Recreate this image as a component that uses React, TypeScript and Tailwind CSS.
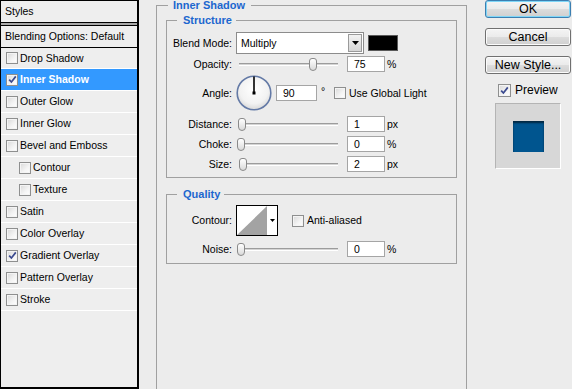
import React from 'react';

const STYLES = [
  { name: 'Drop Shadow', checked: false },
  { name: 'Inner Shadow', checked: true, selected: true },
  { name: 'Outer Glow', checked: false },
  { name: 'Inner Glow', checked: false },
  { name: 'Bevel and Emboss', checked: false },
  { name: 'Contour', checked: false, indent: true },
  { name: 'Texture', checked: false, indent: true },
  { name: 'Satin', checked: false },
  { name: 'Color Overlay', checked: false },
  { name: 'Gradient Overlay', checked: true },
  { name: 'Pattern Overlay', checked: false },
  { name: 'Stroke', checked: false },
];

function Check({ checked, size = 'w-[12px] h-[12px]' }: { checked?: boolean; size?: string }) {
  return (
    <span className={`${size} shrink-0 border border-[#8e8f8f] bg-[linear-gradient(135deg,#d8d8d8,#f4f4f4_60%,#ffffff)] shadow-[inset_0_0_0_1px_#f4f4f4] flex items-center justify-center`}>
      {checked && (
        <svg width="9" height="9" viewBox="0 0 9 9">
          <path d="M1.2 4.6 L3.4 7 L7.8 1.4" fill="none" stroke="#3b4a8f" strokeWidth="1.7" />
        </svg>
      )}
    </span>
  );
}

function Label({ children }: { children: React.ReactNode }) {
  return <div className="w-[65px] shrink-0 text-right">{children}</div>;
}

function Field({ value, w = 'w-[38px]' }: { value: string; w?: string }) {
  return (
    <div className={`${w} h-[16px] shrink-0 border border-[#a5a5a5] bg-white pl-[6px] flex items-center leading-none`}>
      {value}
    </div>
  );
}

function Slider({ value }: { value: number }) {
  return (
    <div className="relative w-[104px] h-[13px] shrink-0 flex items-center">
      <div className="ml-[2px] w-[99px] h-[3px] border-t border-[#9c9c9c] border-b border-b-white bg-[#d4d4d4]" />
      <div
        className="absolute top-0 w-[8px] h-[13px] rounded-[3px] rounded-b-[4px] border border-[#8a8a8a] bg-[linear-gradient(#ffffff,#dadada)]"
        style={{ left: `${value * 0.96}px` }}
      />
    </div>
  );
}

function SliderRow({ label, value, unit, mt }: { label: string; value: number; unit: string; mt: string }) {
  return (
    <div className={`flex items-center h-[16px] ${mt}`}>
      <Label>{label}</Label>
      <div className="ml-[5px]">
        <Slider value={value} />
      </div>
      <div className="ml-[6px]">
        <Field value={String(value)} />
      </div>
      <span className="ml-[2px]">{unit}</span>
    </div>
  );
}

function Button({ children, primary }: { children: React.ReactNode; primary?: boolean }) {
  return (
    <div
      className={`h-[18px] w-[86px] rounded-[3px] border flex items-center justify-center text-[12.5px] leading-none bg-[linear-gradient(#f4f4f4,#ebebeb_48%,#dcdcdc_52%,#cfcfcf)] ${
        primary ? 'border-[#3c7fb1] shadow-[inset_0_0_0_1px_#7fd6f7]' : 'border-[#707070] shadow-[inset_0_0_0_1px_#fbfbfb]'
      }`}
    >
      {children}
    </div>
  );
}

export default function App() {
  return (
    <div className="w-[572px] h-[389px] overflow-hidden bg-[#ececec] flex items-start text-[10.5px] leading-[13px] text-black font-['Liberation_Sans',Arial,sans-serif]">
      {/* styles list */}
      <div className="w-[139px] h-[389px] shrink-0 border-l border-t border-r-2 border-b-2 border-black bg-[#eeeeee] flex flex-col">
        <div className="h-[22px] shrink-0 pl-[4px] flex items-center border-b border-black">Styles</div>
        <div className="h-[2px] shrink-0 bg-[#a8a8a8]" />
        <div className="h-[23px] shrink-0 pl-[4px] flex items-center border-y border-black">Blending Options: Default</div>
        {STYLES.map((s, i) => (
          <div
            key={s.name}
            className={`${i === 0 ? 'h-[21px]' : 'h-[22px]'} shrink-0 flex items-center border-b border-white ${
              s.indent ? 'pl-[18px]' : 'pl-[5px]'
            } ${s.selected ? 'bg-[#3399ff] text-white font-bold' : ''}`}
          >
            <Check checked={s.checked} />
            <span className="ml-[2px]">{s.name}</span>
          </div>
        ))}
      </div>

      {/* settings */}
      <fieldset className="ml-[17px] w-[311px] h-[410px] shrink-0 border border-[#a0a0a0] px-[9px]">
        <legend className="ml-[2px] pl-[5px] pr-[6px] font-bold text-[11px] text-[#1c67cf] leading-[10px]">Inner Shadow</legend>

        <fieldset className="mt-[4px] border border-[#a0a0a0] pb-[5px]">
          <legend className="ml-[10px] pl-[6px] pr-[4px] font-bold text-[11px] text-[#1c67cf] leading-[12px]">Structure</legend>

          <div className="flex items-center h-[22px] mt-[6px]">
            <Label>Blend Mode:</Label>
            <div className="ml-[4px] w-[128px] h-[22px] shrink-0 border border-[#8c8c8c] bg-white flex items-center justify-between pl-[4px] pr-[1px]">
              <span>Multiply</span>
              <div className="w-[14px] h-[18px] border border-[#9a9a9a] bg-[linear-gradient(#f2f2f2,#d6d6d6)] flex items-center justify-center">
                <svg width="7" height="4" viewBox="0 0 7 4">
                  <path d="M0 0 H7 L3.5 4 Z" fill="#000" />
                </svg>
              </div>
            </div>
            <div className="ml-[4px] w-[30px] h-[16px] border border-[#5a5a5a] bg-black" />
          </div>

          <SliderRow label="Opacity:" value={75} unit="%" mt="mt-[2px]" />

          <div className="flex items-center h-[36px] mt-[3px]">
            <Label>Angle:</Label>
            <div className="ml-[4px] w-[36px] h-[36px] shrink-0">
              <svg width="36" height="36" viewBox="0 0 36 36">
                <defs>
                  <radialGradient id="dial" cx="50%" cy="40%" r="60%">
                    <stop offset="0%" stopColor="#ffffff" />
                    <stop offset="70%" stopColor="#f2f2f2" />
                    <stop offset="100%" stopColor="#d8d8d8" />
                  </radialGradient>
                </defs>
                <circle cx="18" cy="18" r="16.8" fill="url(#dial)" stroke="#647aa6" strokeWidth="1.6" />
                <line x1="18" y1="18" x2="18" y2="1.5" stroke="#000" strokeWidth="1.6" />
                <rect x="16.5" y="16.5" width="3" height="3" fill="#000" />
              </svg>
            </div>
            <div className="ml-[4px]">
              <Field value="90" w="w-[41px]" />
            </div>
            <span className="ml-[4px] w-[13px] self-start mt-[10px]">°</span>
            <Check />
            <span className="ml-[3px]">Use Global Light</span>
          </div>

          <SliderRow label="Distance:" value={1} unit="px" mt="mt-[5px]" />
          <SliderRow label="Choke:" value={0} unit="%" mt="mt-[4px]" />
          <SliderRow label="Size:" value={2} unit="px" mt="mt-[4px]" />
        </fieldset>

        <fieldset className="mt-[10px] border border-[#a0a0a0] pb-[6px]">
          <legend className="ml-[10px] pl-[6px] pr-[4px] font-bold text-[11px] text-[#1c67cf] leading-[12px]">Quality</legend>

          <div className="flex items-center h-[31px] mt-[5px]">
            <Label>Contour:</Label>
            <div className="ml-[4px] w-[42px] h-[31px] shrink-0 border border-black bg-white">
              <svg width="40" height="29" viewBox="0 0 40 29">
                <polygon points="0,29 30,0 30,29" fill="#a3a3a3" />
                <polygon points="33,13 38,13 35.5,16" fill="#000" />
              </svg>
            </div>
            <div className="ml-[14px]">
              <Check />
            </div>
            <span className="ml-[3px]">Anti-aliased</span>
          </div>

          <SliderRow label="Noise:" value={0} unit="%" mt="mt-[5px]" />
        </fieldset>
      </fieldset>

      {/* buttons */}
      <div className="ml-[18px] w-[86px] shrink-0 flex flex-col">
        <Button primary>OK</Button>
        <div className="mt-[10px]">
          <Button>Cancel</Button>
        </div>
        <div className="mt-[10px]">
          <Button>New Style...</Button>
        </div>
        <div className="mt-[10px] h-[13px] flex items-center text-[12px] ml-[13px]">
          <Check checked size="w-[13px] h-[13px]" />
          <span className="ml-[4px]">Preview</span>
        </div>
        <div className="mt-[6px] self-center w-[66px] h-[66px] border border-[#b4b4b4] border-r-white border-b-white bg-[#d7d7d7] flex items-center justify-center">
          <div className="w-[31px] h-[31px] bg-[#00558f] shadow-[inset_0_2px_2px_rgba(0,0,0,0.55)]" />
        </div>
      </div>
    </div>
  );
}
